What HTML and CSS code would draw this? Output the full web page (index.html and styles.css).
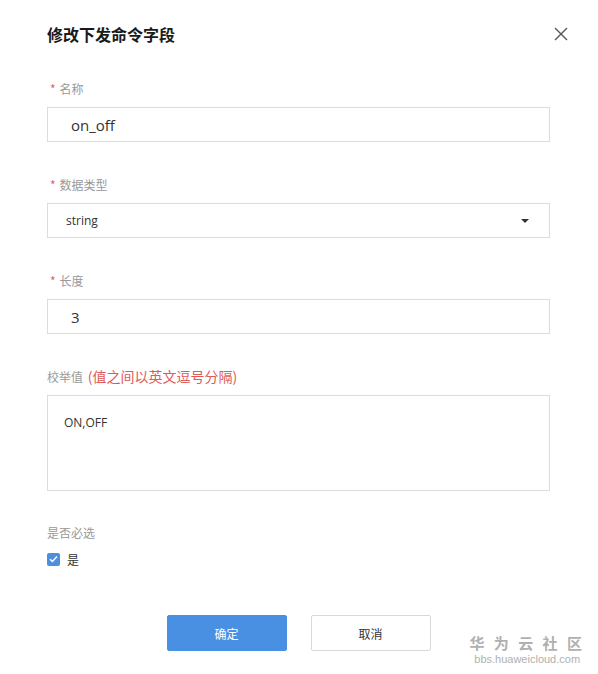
FILE: index.html
```html
<!DOCTYPE html>
<html>
<head>
<meta charset="utf-8">
<link rel="stylesheet" href="styles.css">
</head>
<body>
<div class="dialog">
  <div class="header">
    <h1 class="title">修改下发命令字段</h1>
    <svg class="close" width="14" height="14" viewBox="0 0 14 14"><path d="M1 1L13 13M13 1L1 13" stroke="#555" stroke-width="1.4" fill="none"/></svg>
  </div>
  <div class="field">
    <div class="label"><span class="star">*</span>名称</div>
    <div class="input"><span class="val big">on_off</span></div>
  </div>
  <div class="field">
    <div class="label"><span class="star">*</span>数据类型</div>
    <div class="input select"><span class="val small">string</span><span class="caret"></span></div>
  </div>
  <div class="field">
    <div class="label"><span class="star">*</span>长度</div>
    <div class="input"><span class="val big">3</span></div>
  </div>
  <div class="field">
    <div class="label">校举值 <span class="hint">(值之间以英文逗号分隔)</span></div>
    <div class="textarea"><span class="val small">ON,OFF</span></div>
  </div>
  <div class="field req">
    <div class="label">是否必选</div>
    <div class="check-row">
      <span class="checkbox"><svg width="9" height="8" viewBox="0 0 9 8"><path d="M1 4.2L3.4 6.4L8 1.5" stroke="#fff" stroke-width="1.5" fill="none"/></svg></span>
      <span class="check-text">是</span>
    </div>
  </div>
  <div class="buttons">
    <button class="btn primary">确定</button>
    <button class="btn">取消</button>
  </div>
</div>
<div class="watermark">
  <div class="wm-cn">华 为 云 社 区</div>
  <div class="wm-en">bbs.huaweicloud.com</div>
</div>
</body>
</html>
```
FILE: styles.css
```css
html, body {
  margin: 0;
  padding: 0;
  background: #fff;
  font-family: "Noto Sans CJK SC", "Liberation Sans", sans-serif;
}
body {
  width: 598px;
  height: 674px;
  position: relative;
  overflow: hidden;
}
.dialog {
  padding: 0 48px 0 47px;
  display: flex;
  flex-direction: column;
}
.header {
  display: flex;
  justify-content: space-between;
  align-items: center;
  height: 24px;
  margin-top: 22px;
}
.title {
  margin: 0;
  font-size: 16px;
  font-weight: 700;
  color: #1a1a1a;
  line-height: 24px;
}
.close {
  margin-right: -18px;
}
.field {
  display: flex;
  flex-direction: column;
  margin-top: 34px;
}
.field:first-of-type { margin-top: 34px; }
.label {
  font-size: 12px;
  color: #999;
  line-height: 17px;
  height: 17px;
  margin-bottom: 10px;
}
.star {
  color: #e0607e;
  margin: 0 4px 0 3px;
}
.hint {
  color: #e05a5a;
  font-size: 14px;
  margin-left: 2px;
}
.input {
  box-sizing: border-box;
  height: 35px;
  border: 1px solid #dcdcdc;
  display: flex;
  align-items: center;
  padding-left: 23px;
}
.select {
  padding-left: 18px;
  padding-right: 20px;
  justify-content: space-between;
}
.caret {
  width: 0;
  height: 0;
  border-left: 4px solid transparent;
  border-right: 4px solid transparent;
  border-top: 4px solid #333;
}
.val {
  color: #333;
  font-family: "Open Sans", "Liberation Sans", sans-serif;
}
.big { font-size: 15px; }
.small { font-size: 12px; }
.textarea {
  box-sizing: border-box;
  height: 96px;
  border: 1px solid #dcdcdc;
  padding: 15px 16px;
  line-height: 18px;
}
.req { margin-top: 33px; }
.check-row {
  display: flex;
  align-items: center;
  height: 16px;
  margin-top: 0;
}
.checkbox {
  width: 13px;
  height: 13px;
  background: #4a8fe0;
  border-radius: 2px;
  display: flex;
  align-items: center;
  justify-content: center;
}
.check-text {
  font-size: 12px;
  color: #333;
  margin-left: 7px;
}
.buttons {
  display: flex;
  justify-content: center;
  gap: 24px;
  margin-top: 48px;
}
.btn {
  box-sizing: border-box;
  width: 120px;
  height: 36px;
  border: 1px solid #d9d9d9;
  background: #fff;
  font-family: "Noto Sans CJK SC", sans-serif;
  font-size: 12px;
  color: #333;
  border-radius: 2px;
}
.primary {
  background: #4a90e2;
  border-color: #4a90e2;
  color: #fff;
}
.watermark {
  position: absolute;
  right: 13px;
  bottom: 8px;
  text-align: center;
  color: #b0b0b0;
}
.wm-cn {
  font-size: 15px;
  font-weight: 700;
  letter-spacing: 3px;
  line-height: 18px;
}
.wm-en {
  font-size: 11px;
  line-height: 14px;
  font-family: "Liberation Sans", sans-serif;
}
```
